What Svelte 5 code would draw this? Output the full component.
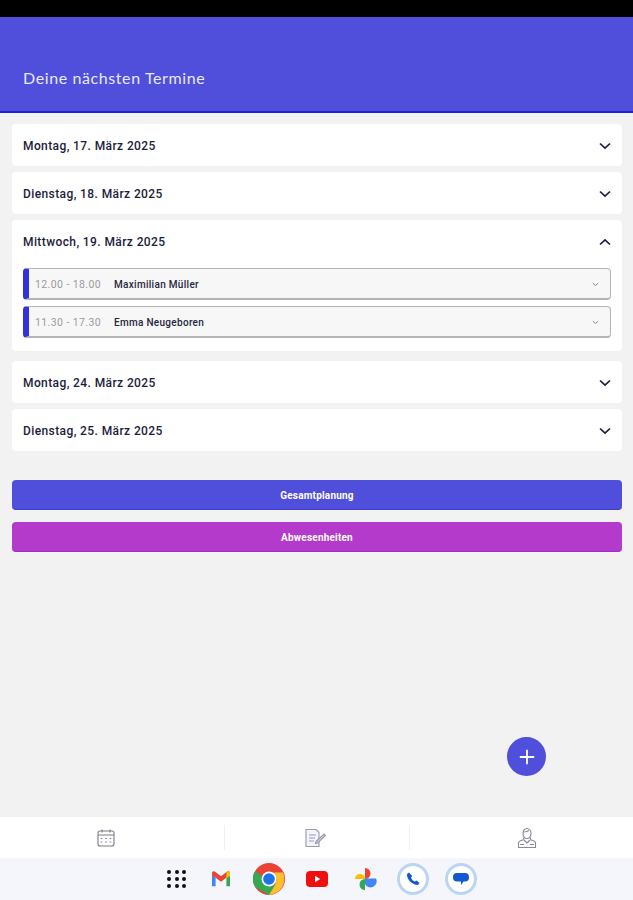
<script>
  const days = [
    { label: 'Montag, 17. März 2025' },
    { label: 'Dienstag, 18. März 2025' },
    {
      label: 'Mittwoch, 19. März 2025',
      open: true,
      slots: [
        { time: '12.00 - 18.00', name: 'Maximilian Müller' },
        { time: '11.30 - 17.30', name: 'Emma Neugeboren' }
      ]
    },
    { label: 'Montag, 24. März 2025' },
    { label: 'Dienstag, 25. März 2025' }
  ];
</script>

<div class="page">
  <div class="statusbar"></div>
  <header class="header"><h1>Deine nächsten Termine</h1></header>

  <main class="content">
    <section class="days">
      {#each days as day}
        <article class="card">
          <div class="card-head">
            <span class="day">{day.label}</span>
            <svg class="chev" viewBox="0 0 12 8" width="12" height="8">
              <path d={day.open ? 'M1 6.5 6 1.8 11 6.5' : 'M1 1.5 6 6.2 11 1.5'} fill="none" stroke="#1c1c44" stroke-width="1.7" />
            </svg>
          </div>
          {#if day.open}
            <div class="slots">
              {#each day.slots as slot}
                <div class="slot">
                  <span class="time">{slot.time}</span>
                  <span class="name">{slot.name}</span>
                  <svg class="mini" viewBox="0 0 8 5" width="7" height="5">
                    <path d="M1 1 4 3.6 7 1" fill="none" stroke="#77777d" stroke-width="1" />
                  </svg>
                </div>
              {/each}
            </div>
          {/if}
        </article>
      {/each}
    </section>

    <section class="actions">
      <button class="btn blue">Gesamtplanung</button>
      <button class="btn purple">Abwesenheiten</button>
    </section>

    <div class="fab-row">
      <button class="fab" aria-label="Hinzufügen">
        <svg viewBox="0 0 16 16" width="16" height="16">
          <path d="M8 1.5v13M1.5 8h13" stroke="#fff" stroke-width="1.8" stroke-linecap="round" />
        </svg>
      </button>
    </div>
  </main>

  <nav class="tabs">
    <div class="tab">
      <svg viewBox="0 0 20 20" width="20" height="20" fill="none" stroke="#7b7b86" stroke-width="1.1">
        <rect x="2" y="3" width="16" height="15" rx="2" />
        <path d="M2 7h16M6 1.5v3M14 1.5v3" />
        <path d="M5.5 10v1M10 10v1M14.5 10v1M5.5 13.500v1M10 13.500v1M14.5 13.500v1" stroke="#6f70c8" stroke-width="1.5" />
      </svg>
    </div>
    <div class="tab">
      <svg viewBox="0 0 24 22" width="24" height="22" fill="none" stroke="#9a9aac" stroke-width="1.1">
        <path d="M3 2.5h10l3 3v14H3z" fill="#f4f4fb" />
        <path d="M6 8h7M6 11h6M6 14h5" stroke="#b4b6e4" stroke-width="1.5" />
        <path d="M13 14.5 21 7l1.5 1.5-8 7.5-2 .5z" fill="#d4d4dc" />
      </svg>
    </div>
    <div class="tab">
      <svg viewBox="0 0 22 22" width="22" height="22" fill="none" stroke="#8a8a96" stroke-width="1.1">
        <ellipse cx="11" cy="6.5" rx="4" ry="5" />
        <path d="M7 5c2 0 5-.5 6-2M8 10.500 7 13c-2.500.5-4.500 1.500-4.500 3v4.500h17V16c0-1.500-2-2.500-4.500-3l-1-2.500" />
        <path d="M4 17.500h4M14 17.500h4M8 13l3 3 3-3" />
      </svg>
    </div>
  </nav>

  <footer class="dock">
    <div class="grid-ico">
      {#each Array(9) as _}<i></i>{/each}
    </div>
    <div class="app">
      <svg viewBox="0 0 24 20" width="22" height="18" fill="none">
        <path d="M2 4v14h4V9z" fill="#4285f4" />
        <path d="M22 4v14h-4V9z" fill="#34a853" />
        <path d="M2 5.5 12 13l10-7.5V3.500C22 1.500 20 .8 18.500 2L12 7 5.500 2C4 .8 2 1.500 2 3.500z" fill="#ea4335" />
        <path d="M18 9.500 22 6.500V3.500C22 1.500 20 .8 18.500 2L18 2.400z" fill="#fbbc04" />
      </svg>
    </div>
    <div class="app">
      <svg viewBox="0 0 32 32" width="32" height="32">
        <circle cx="16" cy="16" r="16" fill="#ea4335" />
        <path d="M2.100 8A16 16 0 0 0 2.100 24L16 32l6-10z" fill="#34a853" />
        <path d="M16 9.500h13.900A16 16 0 0 1 16 32l6-10 2-6z" fill="#fbc02d" />
        <circle cx="16" cy="16" r="7.500" fill="#fff" />
        <circle cx="16" cy="16" r="5.800" fill="#1a73e8" />
      </svg>
    </div>
    <div class="app">
      <svg viewBox="0 0 22 16" width="22" height="16">
        <rect width="22" height="16" rx="4" fill="#f00f0f" />
        <path d="M9 4.800v6.400l5.200-3.200z" fill="#fff" />
      </svg>
    </div>
    <div class="app">
      <svg viewBox="0 0 24 24" width="24" height="24">
        <path d="M12 12H2a5 5 0 0 1 5-5 5 5 0 0 1 5 5z" fill="#fbbc04" />
        <path d="M12 12V1a5.500 5.500 0 0 1 0 11z" fill="#ea4335" />
        <path d="M12 12h11a5.500 5.500 0 0 1-11 5.500z" fill="#4285f4" transform="translate(0 -.5)" />
        <path d="M12 12v11a5.500 5.500 0 0 1-5.500-5.500A5.500 5.500 0 0 1 12 12z" fill="#34a853" />
      </svg>
    </div>
    <div class="app ring">
      <svg viewBox="0 0 16 16" width="16" height="16">
        <path d="M4 1.500 2 3c-.5 5 5 11 11 11l1.500-2-3-2.500-1.500 1c-2-.5-3.500-2.500-4-4l1.200-1.500z" fill="#1558d6" />
      </svg>
    </div>
    <div class="app ring">
      <svg viewBox="0 0 18 16" width="18" height="16">
        <path d="M5 2h8a4 4 0 0 1 4 4v.5a4 4 0 0 1-4 4h-1.500L9 14v-3.500H5a4 4 0 0 1-4-4V6a4 4 0 0 1 4-4z" fill="#1558d6" />
      </svg>
    </div>
  </footer>
</div>

<style>
  :global(body) {
    margin: 0;
  }
  .page {
    width: 633px;
    height: 900px;
    display: flex;
    flex-direction: column;
    background: #f2f2f2;
    font-family: Roboto, sans-serif;
    overflow: hidden;
  }
  .statusbar {
    height: 17px;
    background: #000;
  }
  .header {
    height: 96px;
    box-sizing: border-box;
    background: #4f4fdc;
    border-bottom: 2px solid #2020d8;
    padding: 50px 23px 0;
  }
  h1 {
    margin: 0;
    font: 400 16px/22px Lato, "Open Sans", sans-serif;
    letter-spacing: 0.6px;
    color: #e9e9ff;
  }
  .content {
    flex: 1;
    display: flex;
    flex-direction: column;
    padding: 11px 11px 0 12px;
  }
  .days {
    display: flex;
    flex-direction: column;
    gap: 6px;
  }
  .card {
    background: #fff;
    border-radius: 4px;
  }
  .card:nth-child(3) {
    margin-bottom: 4px;
  }
  .card-head {
    height: 42px;
    box-sizing: border-box;
    display: flex;
    align-items: center;
    justify-content: space-between;
    padding: 2px 11px 0;
  }
  .day {
    font-size: 12px;
    font-weight: 500;
    letter-spacing: 0.4px;
    color: #1c1c3c;
  }
  .slots {
    display: flex;
    flex-direction: column;
    gap: 6px;
    padding: 6px 11px 13px;
  }
  .slot {
    height: 32px;
    box-sizing: border-box;
    display: flex;
    align-items: center;
    background: #f7f7f8;
    border: 1px solid #b4b4b8;
    border-bottom-width: 2px;
    border-left: 6px solid #3232dc;
    border-radius: 4px;
    padding: 2px 11px 0 6px;
  }
  .time {
    width: 79px;
    font-size: 10.5px;
    letter-spacing: 0.4px;
    color: #9a9a9e;
  }
  .name {
    flex: 1;
    font-size: 10px;
    font-weight: 500;
    letter-spacing: 0.3px;
    color: #26263e;
  }
  .actions {
    display: flex;
    flex-direction: column;
    gap: 12px;
    margin-top: 29px;
  }
  .btn {
    height: 30px;
    border: none;
    border-radius: 4px;
    padding: 2px 0 0;
    font: 700 10px Roboto, sans-serif;
    letter-spacing: 0.2px;
    color: #fff;
  }
  .blue {
    background: #4f4fdc;
    border-bottom: 1px solid #3b3bd4;
  }
  .purple {
    background: #b43acb;
    border-bottom: 1px solid #a42ac4;
  }
  .fab-row {
    display: flex;
    justify-content: flex-end;
    margin-top: 185px;
    padding-right: 76px;
  }
  .fab {
    width: 39px;
    height: 39px;
    border: none;
    border-radius: 50%;
    padding: 0;
    background: #4f4fdc;
    display: flex;
    align-items: center;
    justify-content: center;
  }
  .tabs {
    height: 41px;
    display: grid;
    grid-template-columns: 224px 185px 1fr;
    background: #fff;
  }
  .tab {
    display: flex;
    align-items: center;
    justify-content: center;
    position: relative;
  }
  .tab:nth-child(1) {
    padding-right: 12px;
    box-sizing: border-box;
  }
  .tab:nth-child(2) {
    padding-right: 3px;
    box-sizing: border-box;
  }
  .tab:nth-child(3) {
    padding-left: 12px;
    box-sizing: border-box;
  }
  .tab + .tab::before {
    content: '';
    position: absolute;
    left: 0;
    top: 8px;
    bottom: 8px;
    width: 1px;
    background: #f0f0f2;
  }
  .dock {
    height: 42px;
    box-sizing: border-box;
    background: #f5f6fc;
    display: flex;
    align-items: center;
    justify-content: center;
    gap: 16px;
    padding: 0 0 0 11px;
  }
  .grid-ico {
    width: 19px;
    display: grid;
    grid-template-columns: repeat(3, 4px);
    justify-content: space-between;
    gap: 3px 0;
    margin-right: 3px;
  }
  .grid-ico i {
    width: 4px;
    height: 4px;
    border-radius: 50%;
    background: #111;
  }
  .app {
    width: 32px;
    height: 32px;
    border-radius: 50%;
    display: flex;
    align-items: center;
    justify-content: center;
  }
  .ring {
    box-sizing: border-box;
    background: #fff;
    border: 3px solid #bcd4f4;
  }
</style>
